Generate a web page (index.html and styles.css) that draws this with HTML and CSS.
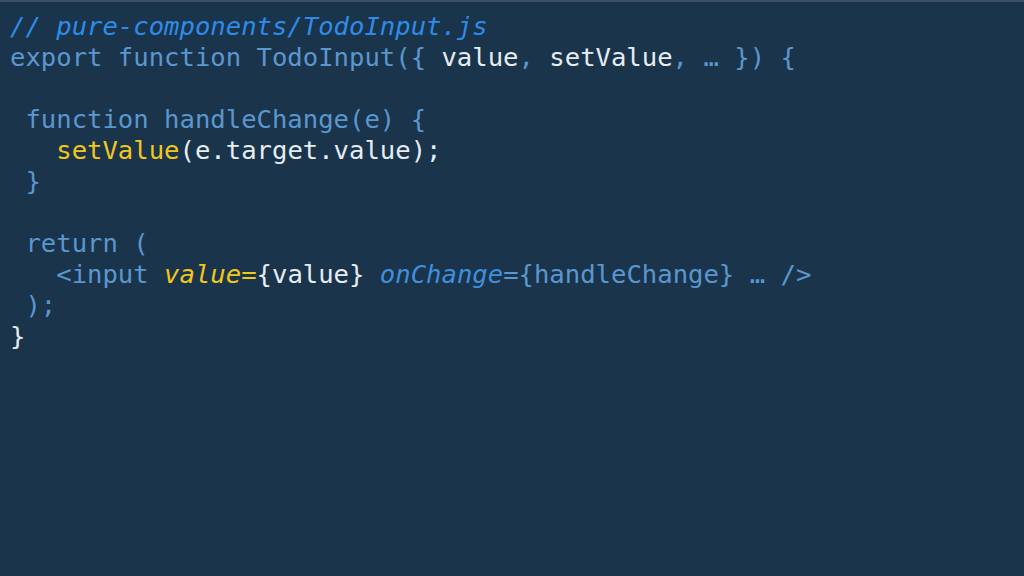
FILE: index.html
```html
<!DOCTYPE html>
<html>
<head>
<meta charset="utf-8">
<link rel="stylesheet" href="styles.css">
</head>
<body>
<div class="slide">
<pre class="code"><span class="cm">// pure-components/TodoInput.js</span>
<span class="kw">export function TodoInput({ </span><span class="tx">value</span><span class="kw">, </span><span class="tx">setValue</span><span class="kw">, … }) {</span>

<span class="kw"> function handleChange(e) {</span>
<span class="kw">   </span><span class="fn">setValue</span><span class="tx">(e.target.value);</span>
<span class="kw"> }</span>

<span class="kw"> return (</span>
<span class="kw">   &lt;input </span><span class="at">value</span><span class="eq">=</span><span class="tx">{value}</span><span class="kw"> </span><span class="at2">onChange</span><span class="kw">={handleChange} … /&gt;</span>
<span class="kw"> );</span>
<span class="tx">}</span></pre>
</div>
</body>
</html>
```
FILE: styles.css
```css
html, body {
  margin: 0;
  padding: 0;
  background: #1a344b;
}
.slide {
  width: 1024px;
  height: 576px;
  box-sizing: border-box;
  background: #1a344b;
  border-top: 2px solid #3d5063;
  padding: 9px 0 0 10px;
  overflow: hidden;
}
.code {
  margin: 0;
  font-family: "DejaVu Sans Mono", "Liberation Mono", monospace;
  font-size: 25.6px;
  line-height: 31px;
  color: #5b97cf;
  white-space: pre;
}
.cm { color: #2e8be8; font-style: italic; }
.kw { color: #5b97cf; }
.tx { color: #e6edf2; }
.fn { color: #f2c71b; }
.at { color: #f2c71b; font-style: italic; }
.eq { color: #f2c71b; }
.at2 { color: #3f8fdc; font-style: italic; }
```
